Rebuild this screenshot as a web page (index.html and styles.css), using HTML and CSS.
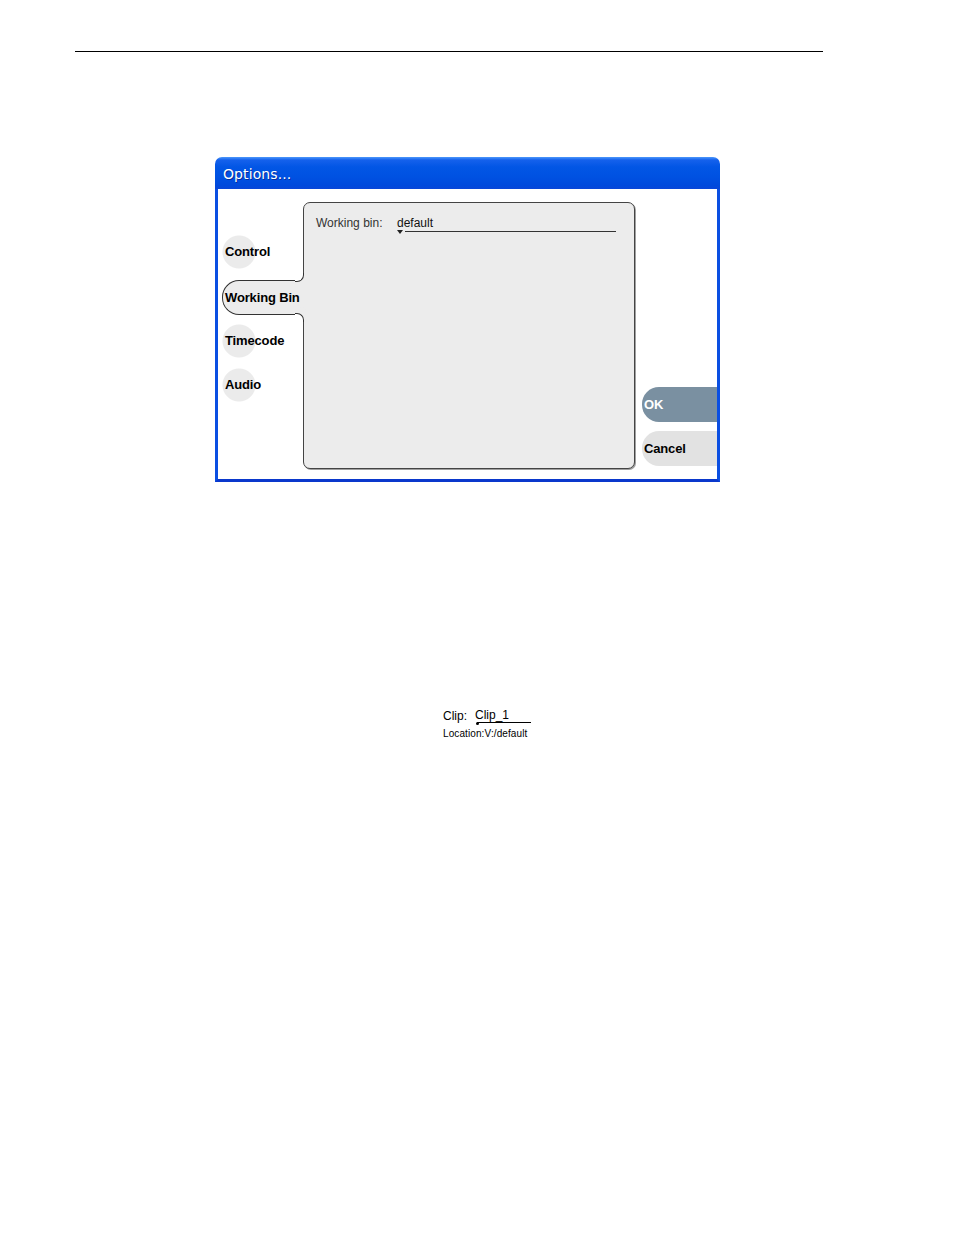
FILE: index.html
```html
<!DOCTYPE html>
<html lang="en">
<head>
    <meta charset="UTF-8">
    <meta name="viewport" content="width=device-width, initial-scale=1.0">
    <title>Options</title>
    <link rel="stylesheet" href="styles.css">
</head>
<body>

    <div class="page-rule"></div>

    <div class="dialog">
        <div class="titlebar">Options...</div>
        <div class="client">
            <div class="tabs">
                <div class="tab">Control</div>
                <div class="tab active">Working Bin</div>
                <div class="tab">Timecode</div>
                <div class="tab">Audio</div>
            </div>

            <div class="panel">
                <div class="field-row">
                    <span class="field-label">Working bin:</span>
                    <span class="field-value">default</span>
                </div>
            </div>

            <div class="buttons">
                <button class="btn ok">OK</button>
                <button class="btn cancel">Cancel</button>
            </div>
        </div>
    </div>

    <div class="clip-info">
        <div class="clip-row">
            <span class="clip-label">Clip:</span>
            <span class="clip-field">Clip_1</span>
        </div>
        <div class="clip-location">Location:V:/default</div>
    </div>

</body>
</html>
```

FILE: styles.css
```css
* {
    margin: 0;
    padding: 0;
    box-sizing: border-box;
}

body {
    font-family: "Liberation Sans", Arial, sans-serif;
    background-color: #fff;
    color: #000;
}

.page-rule {
    margin: 51px 131px 0 75px;
    border-top: 1px solid #000;
}

/* dialog window */
.dialog {
    margin: 105px 0 0 215px;
    width: 505px;
}

.titlebar {
    height: 32px;
    padding: 9px 0 0 8px;
    border-radius: 7px 7px 0 0;
    background: linear-gradient(#4d98fb 0, #1561ec 3px, #0256e5 10px, #0052e2 60%, #0049dc 90%, #0a46d8 100%);
    color: #fff;
    font-family: "DejaVu Sans", sans-serif;
    font-size: 14px;
    letter-spacing: 0.1px;
    text-shadow: 1px 1px 0 #0a2f9c;
}

.client {
    display: flex;
    height: 293px;
    padding: 13px 0 10px 4px;
    background-color: #fff;
    border: 3px solid #0b4fe2;
    border-top: none;
    border-bottom-color: #0a38cc;
}

/* tabs on the left */
.tabs {
    display: flex;
    flex-direction: column;
    gap: 10px;
    width: 81px;
    padding-top: 33px;
    flex-shrink: 0;
}

.tab {
    height: 34px;
    line-height: 34px;
    padding-left: 3px;
    font-size: 13px;
    font-weight: bold;
    letter-spacing: -0.15px;
    white-space: nowrap;
    color: #000;
    background: radial-gradient(circle at 17px 17px, #ebebeb 16px, rgba(235, 235, 235, 0) 17px);
}

.tab.active {
    position: relative;
    z-index: 1;
    width: 82px;
    height: 35px;
    line-height: 33px;
    margin: 1px 0 -1px;
    padding-left: 2px;
    background: #ececec;
    border: 1px solid #333;
    border-right: none;
    border-radius: 17px 0 0 17px;
}

.tab.active::before,
.tab.active::after {
    content: "";
    position: absolute;
    right: 0;
    width: 8px;
    height: 8px;
    background: #fff;
    border-right: 1px solid #333;
}

.tab.active::before {
    top: -8px;
    border-bottom: 1px solid #333;
    border-bottom-right-radius: 7px;
    box-shadow: 3px 3px 0 3px #ececec;
}

.tab.active::after {
    bottom: -8px;
    border-top: 1px solid #333;
    border-top-right-radius: 7px;
    box-shadow: 3px -3px 0 3px #ececec;
}

/* main panel */
.panel {
    width: 332px;
    height: 267px;
    flex-shrink: 0;
    padding: 12px 18px 0 12px;
    background-color: #ececec;
    border: 1px solid #444;
    border-radius: 7px;
    box-shadow: 1px 1px 0 #a0a0a0;
}

.field-row {
    display: flex;
    align-items: center;
    font-size: 12px;
    color: #333;
}

.field-label {
    width: 81px;
    line-height: 16px;
}

.field-value {
    position: relative;
    flex: 1;
    line-height: 16px;
    color: #111;
}

.field-value::before {
    content: "";
    position: absolute;
    left: 0;
    bottom: -3px;
    border-left: 3px solid transparent;
    border-right: 3px solid transparent;
    border-top: 4px solid #222;
}

.field-value::after {
    content: "";
    position: absolute;
    left: 8px;
    right: 0;
    bottom: -1px;
    border-bottom: 1px solid #333;
}

/* OK / Cancel */
.buttons {
    display: flex;
    flex-direction: column;
    gap: 9px;
    flex: 1;
    padding: 185px 0 0 7px;
}

.btn {
    height: 35px;
    border: none;
    border-radius: 17px 0 0 17px;
    padding-left: 2px;
    text-align: left;
    font-family: "Liberation Sans", Arial, sans-serif;
    font-size: 13px;
    font-weight: bold;
    letter-spacing: -0.15px;
    cursor: pointer;
}

.btn.ok {
    background-color: #7a90a1;
    color: #fff;
}

.btn.cancel {
    background-color: #e2e2e2;
    color: #000;
}

/* clip caption below */
.clip-info {
    margin: 226px 0 0 443px;
}

.clip-row {
    display: flex;
    align-items: flex-end;
    font-size: 12px;
    line-height: 14px;
}

.clip-label {
    width: 32px;
}

.clip-field {
    position: relative;
    width: 56px;
    padding-bottom: 1px;
}

.clip-field::after {
    content: "";
    position: absolute;
    left: 2px;
    right: 0;
    bottom: 0;
    border-bottom: 1px solid #000;
}

.clip-field::before {
    content: "";
    position: absolute;
    left: 1px;
    bottom: -2px;
    width: 3px;
    height: 3px;
    border-radius: 50%;
    background: #000;
}

.clip-location {
    margin-top: 5px;
    font-size: 10px;
    letter-spacing: 0.1px;
}
```
